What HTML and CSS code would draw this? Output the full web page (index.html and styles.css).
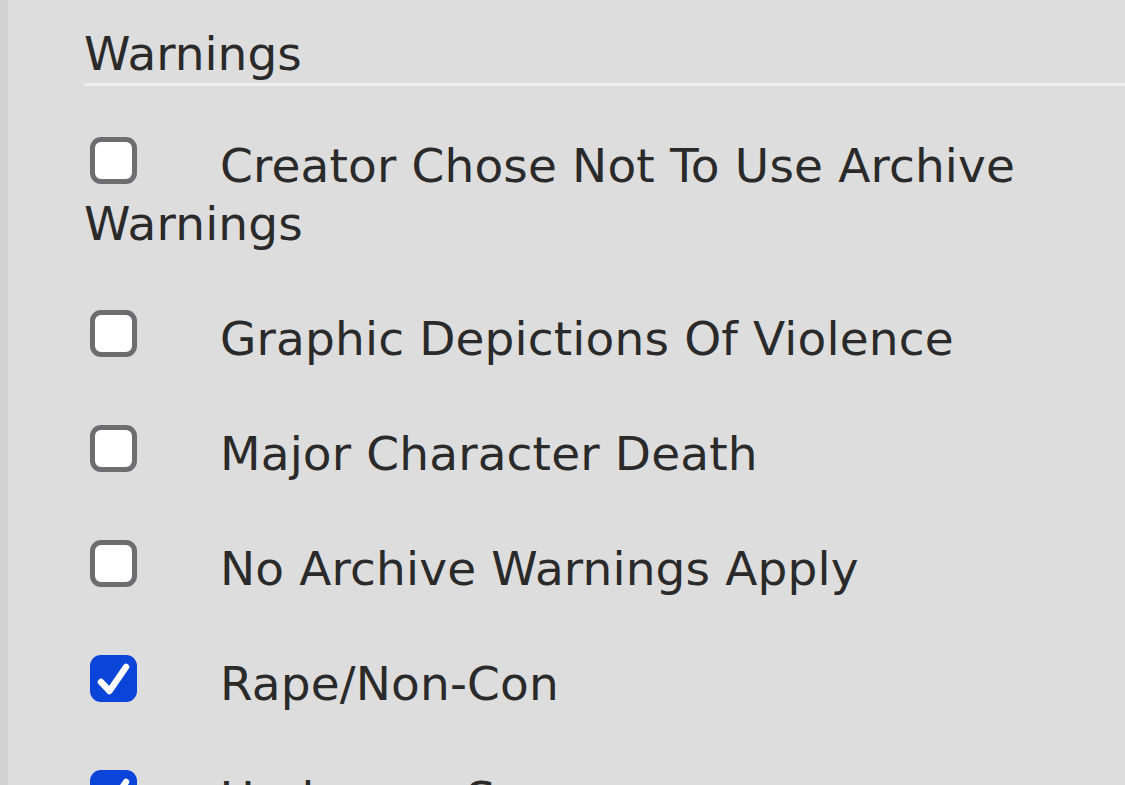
FILE: index.html
```html
<!DOCTYPE html>
<html lang="en">
<head>
    <meta charset="UTF-8">
    <meta name="viewport" content="width=device-width, initial-scale=1.0">
    <title>Warnings</title>
    <link rel="stylesheet" href="styles.css">
</head>
<body>
    <div class="filters">
        <h3 class="heading">Warnings</h3>

        <ul class="options">
            <li>
                <label><span class="box"></span>Creator Chose Not To Use Archive Warnings</label>
            </li>
            <li>
                <label><span class="box"></span>Graphic Depictions Of Violence</label>
            </li>
            <li>
                <label><span class="box"></span>Major Character Death</label>
            </li>
            <li>
                <label><span class="box"></span>No Archive Warnings Apply</label>
            </li>
            <li>
                <label><span class="box checked"><svg viewBox="0 0 47 47"><path d="M11 27 L19.5 36 L36 12"/></svg></span>Rape/Non-Con</label>
            </li>
            <li>
                <label><span class="box checked"><svg viewBox="0 0 47 47"><path d="M11 27 L19.5 36 L36 12"/></svg></span>Underage Sex</label>
            </li>
        </ul>
    </div>
</body>
</html>
```

FILE: styles.css
```css
* {
    margin: 0;
    padding: 0;
    box-sizing: border-box;
}

body {
    font-family: 'DejaVu Sans', Verdana, sans-serif;
    background: #dddddd;
    color: #2a2a2a;
    border-left: 8px solid #d2d2d2;
    min-height: 100vh;
    overflow: hidden;
}

.filters {
    padding: 26px 0 0 76px;
}

.heading {
    font-size: 47px;
    font-weight: normal;
    line-height: 56px;
    padding-bottom: 1px;
    border-bottom: 3px solid #f1efee;
}

.options {
    list-style: none;
    margin-top: 51px;
}

.options li {
    font-size: 47px;
    line-height: 58px;
    margin-bottom: 57px;
    letter-spacing: 0.15px;
}

.box {
    display: inline-block;
    width: 47px;
    height: 47px;
    margin: -4px 83px 0 6px;
    border: 5px solid #6c6c71;
    border-radius: 11px;
    background: #ffffff;
    vertical-align: -2px;
}

.box.checked {
    border: none;
    background: #0a44d8;
}

.box svg {
    display: block;
    width: 47px;
    height: 47px;
    fill: none;
    stroke: #ffffff;
    stroke-width: 6.5;
    stroke-linecap: round;
    stroke-linejoin: round;
}
```
